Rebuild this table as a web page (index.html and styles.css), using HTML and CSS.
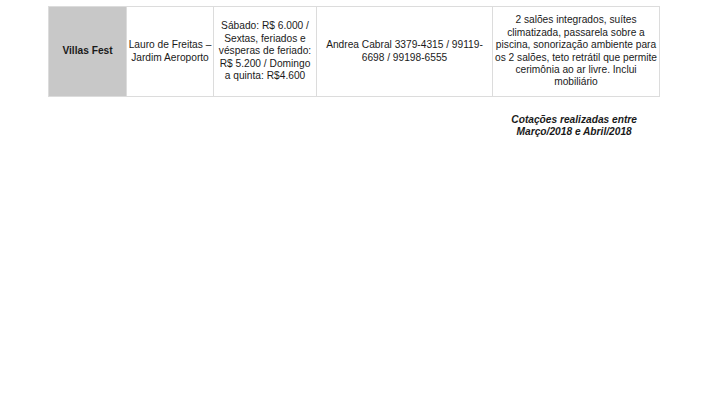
FILE: index.html
```html
<!DOCTYPE html>
<html lang="pt">
<head>
<meta charset="utf-8">
<link rel="stylesheet" href="styles.css">
</head>
<body>
<div class="page">
  <table class="quotes">
    <tr>
      <td class="name">Villas Fest</td>
      <td class="loc">Lauro de Freitas – Jardim Aeroporto</td>
      <td class="price">Sábado: R$ 6.000 / Sextas, feriados e vésperas de feriado: R$ 5.200 / Domingo a quinta: R$4.600</td>
      <td class="contact">Andrea Cabral 3379-4315 / 99119-6698 / 99198-6555</td>
      <td class="desc">2 salões integrados, suítes climatizada, passarela sobre a piscina, sonorização ambiente para os 2 salões, teto retrátil que permite cerimônia ao ar livre. Inclui mobiliário</td>
    </tr>
  </table>
  <div class="note-row">
    <p class="note">Cotações realizadas entre<br>Março/2018 e Abril/2018</p>
  </div>
</div>
</body>
</html>
```

FILE: styles.css
```css
html, body {
  margin: 0;
  padding: 0;
  background: #ffffff;
}
body {
  font-family: "Liberation Sans", Arial, sans-serif;
  color: #1a1a1a;
  width: 720px;
  height: 405px;
  overflow: hidden;
}
.page {
  padding: 6px 0 0 48px;
}
.quotes {
  border-collapse: collapse;
  table-layout: fixed;
}
.quotes td {
  border: 1px solid #dcdcdc;
  height: 89px;
  padding: 0;
  text-align: center;
  vertical-align: middle;
  font-size: 10.2px;
  line-height: 12.4px;
}
.quotes .name {
  width: 77px;
  background: #c8c8c8;
  font-weight: bold;
}
.quotes .loc { width: 86px; }
.quotes .price { width: 98px; padding: 0 2px; }
.quotes .contact { width: 175px; }
.quotes .desc { width: 166px; }
.note-row {
  display: flex;
  justify-content: flex-end;
  width: 611px;
}
.note {
  margin: 17px 22px 0 0;
  font-size: 10.2px;
  line-height: 12px;
  font-weight: bold;
  font-style: italic;
  text-align: center;
}
```
